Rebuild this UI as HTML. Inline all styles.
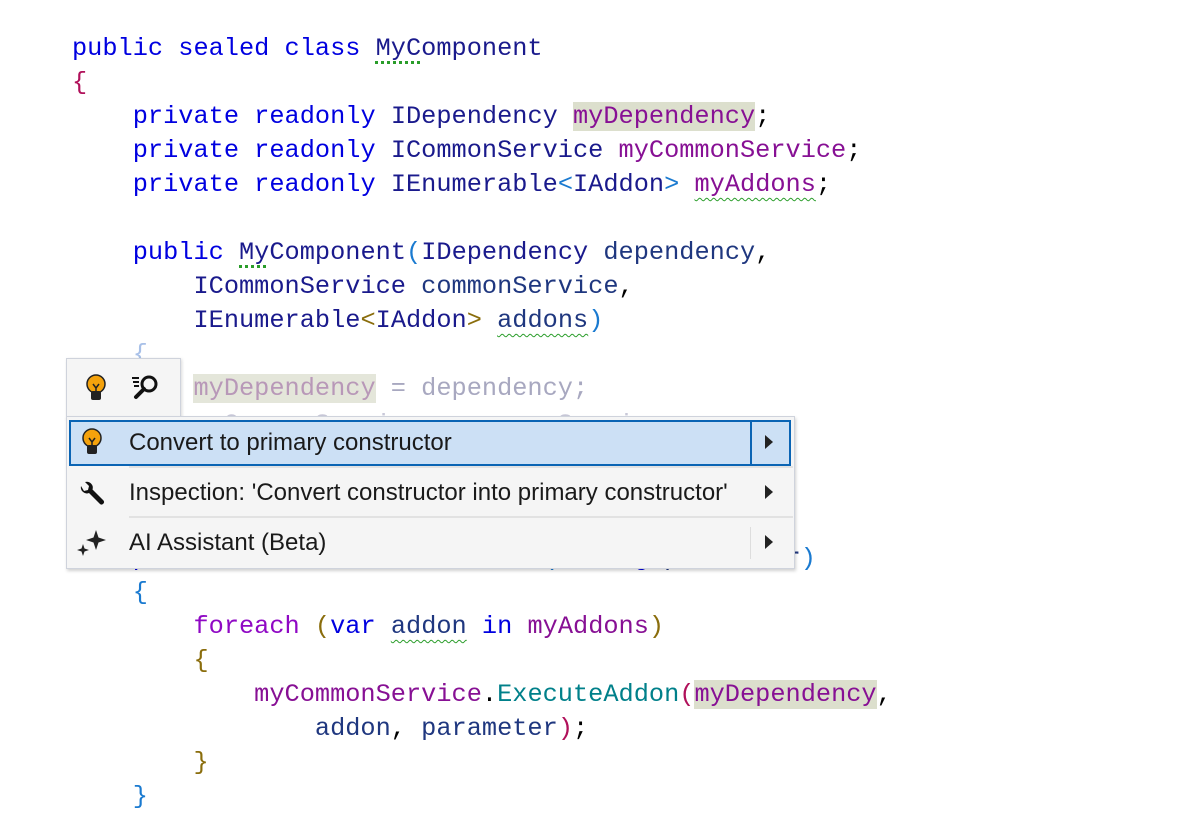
<!DOCTYPE html>
<html><head><meta charset="utf-8"><style>
body{margin:0;width:1200px;height:800px;background:#fff;overflow:hidden;position:relative;font-family:"Liberation Mono",monospace}
.l{position:absolute;left:72px;font-size:25.3px;white-space:pre;height:34px;line-height:34px}
.k{color:#0000e0}.t{color:#1a1a8c}.f{color:#871094}.p{color:#1f377f}.c{color:#0e7490}
.hl{background:#dcdfcd}
.sq{text-decoration:underline wavy #2a9d2a;text-decoration-thickness:1px;text-underline-offset:6px}
.dot{text-decoration:underline dotted #2a9d2a;text-decoration-thickness:3px;text-underline-offset:6px}
.fd{color:#a8a8c0}
.menu{position:absolute;font-family:"Liberation Sans",sans-serif;font-size:24px;color:#1a1a1a}
</style></head><body>
<div class="l" style="top:32px"><span class="k">public sealed class </span><span class="t"><span class="dot">MyC</span>omponent</span></div>
<div class="l" style="top:66px;color:#b0105a">{</div>
<div class="l" style="top:100px">    <span class="k">private readonly </span><span class="t">IDependency </span><span class="f hl">myDependency</span>;</div>
<div class="l" style="top:134px">    <span class="k">private readonly </span><span class="t">ICommonService </span><span class="f">myCommonService</span>;</div>
<div class="l" style="top:168px">    <span class="k">private readonly </span><span class="t">IEnumerable</span><span style="color:#1a7ad0">&lt;</span><span class="t">IAddon</span><span style="color:#1a7ad0">&gt;</span> <span class="f"><span class="sq">myAddons</span></span>;</div>
<div class="l" style="top:236px">    <span class="k">public </span><span class="t"><span class="dot">My</span>Component</span><span style="color:#1a7ad0">(</span><span class="t">IDependency </span><span class="p">dependency</span>,</div>
<div class="l" style="top:270px">        <span class="t">ICommonService </span><span class="p">commonService</span>,</div>
<div class="l" style="top:304px">        <span class="t">IEnumerable</span><span style="color:#8a6d0c">&lt;</span><span class="t">IAddon</span><span style="color:#8a6d0c">&gt;</span> <span class="p sq">addons</span><span style="color:#1a7ad0">)</span></div>
<div class="l fd" style="top:338px;color:#a8c0e8">    {</div>
<div class="l fd" style="top:372px">        <span style="background:#e4e6da;color:#b898b8">myDependency</span> = dependency;</div>
<div class="l fd" style="top:408px;color:#c8c8d8">        myCommonService = commonService;</div>
<div class="l fd" style="top:440px">        myAddons = addons;</div>
<div class="l fd" style="top:474px">    }</div>
<div class="l" style="top:542px">    <span class="k">public void </span><span class="t">RunAllTheAddons</span><span style="color:#1a7ad0">(</span><span class="k">string </span><span class="p">parameter</span><span style="color:#1a7ad0">)</span></div>
<div class="l" style="top:576px;color:#1a7ad0">    {</div>
<div class="l" style="top:610px">        <span style="color:#8f08c4">foreach </span><span style="color:#8a6d0c">(</span><span class="k">var </span><span class="p sq">addon</span> <span class="k">in </span><span class="f">myAddons</span><span style="color:#8a6d0c">)</span></div>
<div class="l" style="top:644px;color:#8a6d0c">        {</div>
<div class="l" style="top:678px">            <span class="f">myCommonService</span>.<span style="color:#00808a">ExecuteAddon</span><span style="color:#b0105a">(</span><span class="f hl">myDependency</span>,</div>
<div class="l" style="top:712px">                <span class="p">addon</span>, <span class="p">parameter</span><span style="color:#b0105a">)</span>;</div>
<div class="l" style="top:746px;color:#8a6d0c">        }</div>
<div class="l" style="top:780px;color:#1a7ad0">    }</div>

<div style="position:absolute;left:66px;top:358px;width:113px;height:60px;background:#f5f5f5;border:1px solid #cfd3dc;border-bottom:none;box-shadow:1px 1px 3px rgba(0,0,0,.15)"></div>
<svg style="position:absolute;left:84px;top:374px" width="24" height="28" viewBox="0 0 24 28"><circle cx="12" cy="10" r="9" fill="#f4a20c" stroke="#222" stroke-width="1.5"/><rect x="7" y="17" width="10" height="9" rx="2" fill="#222"/><path d="M9 10l3 4 3-4M12 14v4" stroke="#222" stroke-width="1.5" fill="none"/></svg>
<svg style="position:absolute;left:131px;top:374px" width="30" height="28" viewBox="0 0 30 28"><circle cx="18" cy="10" r="7" fill="none" stroke="#111" stroke-width="3"/><path d="M13 15l-8 8" stroke="#111" stroke-width="4" stroke-linecap="round"/><path d="M1 4h7M2 8h6M3 12h5" stroke="#111" stroke-width="2"/></svg>
<div style="position:absolute;left:66px;top:416px;width:727px;height:151px;background:#f5f5f5;border:1px solid #cfd3dc;box-shadow:1px 2px 3px rgba(0,0,0,.18)"></div>
<div style="position:absolute;left:69px;top:420px;width:718px;height:42px;background:#cce0f5;border:2px solid #0a64b4"></div>
<div style="position:absolute;left:750px;top:422px;width:2px;height:42px;background:#0a64b4"></div>
<div style="position:absolute;left:129px;top:466px;width:664px;height:2px;background:#e2e2e2"></div>
<div style="position:absolute;left:129px;top:516px;width:664px;height:2px;background:#e2e2e2"></div>
<div style="position:absolute;left:750px;top:527px;width:1px;height:32px;background:#ddd"></div>
<svg style="position:absolute;left:80px;top:428px" width="24" height="28" viewBox="0 0 24 28"><circle cx="12" cy="10" r="9" fill="#f4a20c" stroke="#222" stroke-width="1.5"/><rect x="7" y="17" width="10" height="9" rx="2" fill="#222"/><path d="M9 10l3 4 3-4M12 14v4" stroke="#222" stroke-width="1.5" fill="none"/></svg>
<svg style="position:absolute;left:78px;top:480px" width="28" height="28" viewBox="0 0 28 28"><path d="M3 6a6 6 0 0 0 8 7l11 11a2.5 2.5 0 0 0 3.5-3.5L14.5 9.5A6 6 0 0 0 7 2l4 4-1 4-4 1z" fill="#111"/></svg>
<svg style="position:absolute;left:76px;top:528px" width="32" height="30" viewBox="0 0 32 30"><path d="M20 2l2.5 7.5L30 12l-7.5 2.5L20 22l-2.5-7.5L10 12l7.5-2.5z" fill="#222"/><path d="M7 16l1.5 4.5L13 22l-4.5 1.5L7 28l-1.5-4.5L1 22l4.5-1.5z" fill="#222"/></svg>
<div class="menu" style="left:129px;top:429px">Convert to primary constructor</div>
<div class="menu" style="left:129px;top:479px">Inspection: 'Convert constructor into primary constructor'</div>
<div class="menu" style="left:129px;top:529px">AI Assistant (Beta)</div>
<svg style="position:absolute;left:764px;top:434px" width="10" height="16"><path d="M1 1l8 7-8 7z" fill="#222"/></svg>
<svg style="position:absolute;left:764px;top:484px" width="10" height="16"><path d="M1 1l8 7-8 7z" fill="#222"/></svg>
<svg style="position:absolute;left:764px;top:534px" width="10" height="16"><path d="M1 1l8 7-8 7z" fill="#222"/></svg>
</body></html>
